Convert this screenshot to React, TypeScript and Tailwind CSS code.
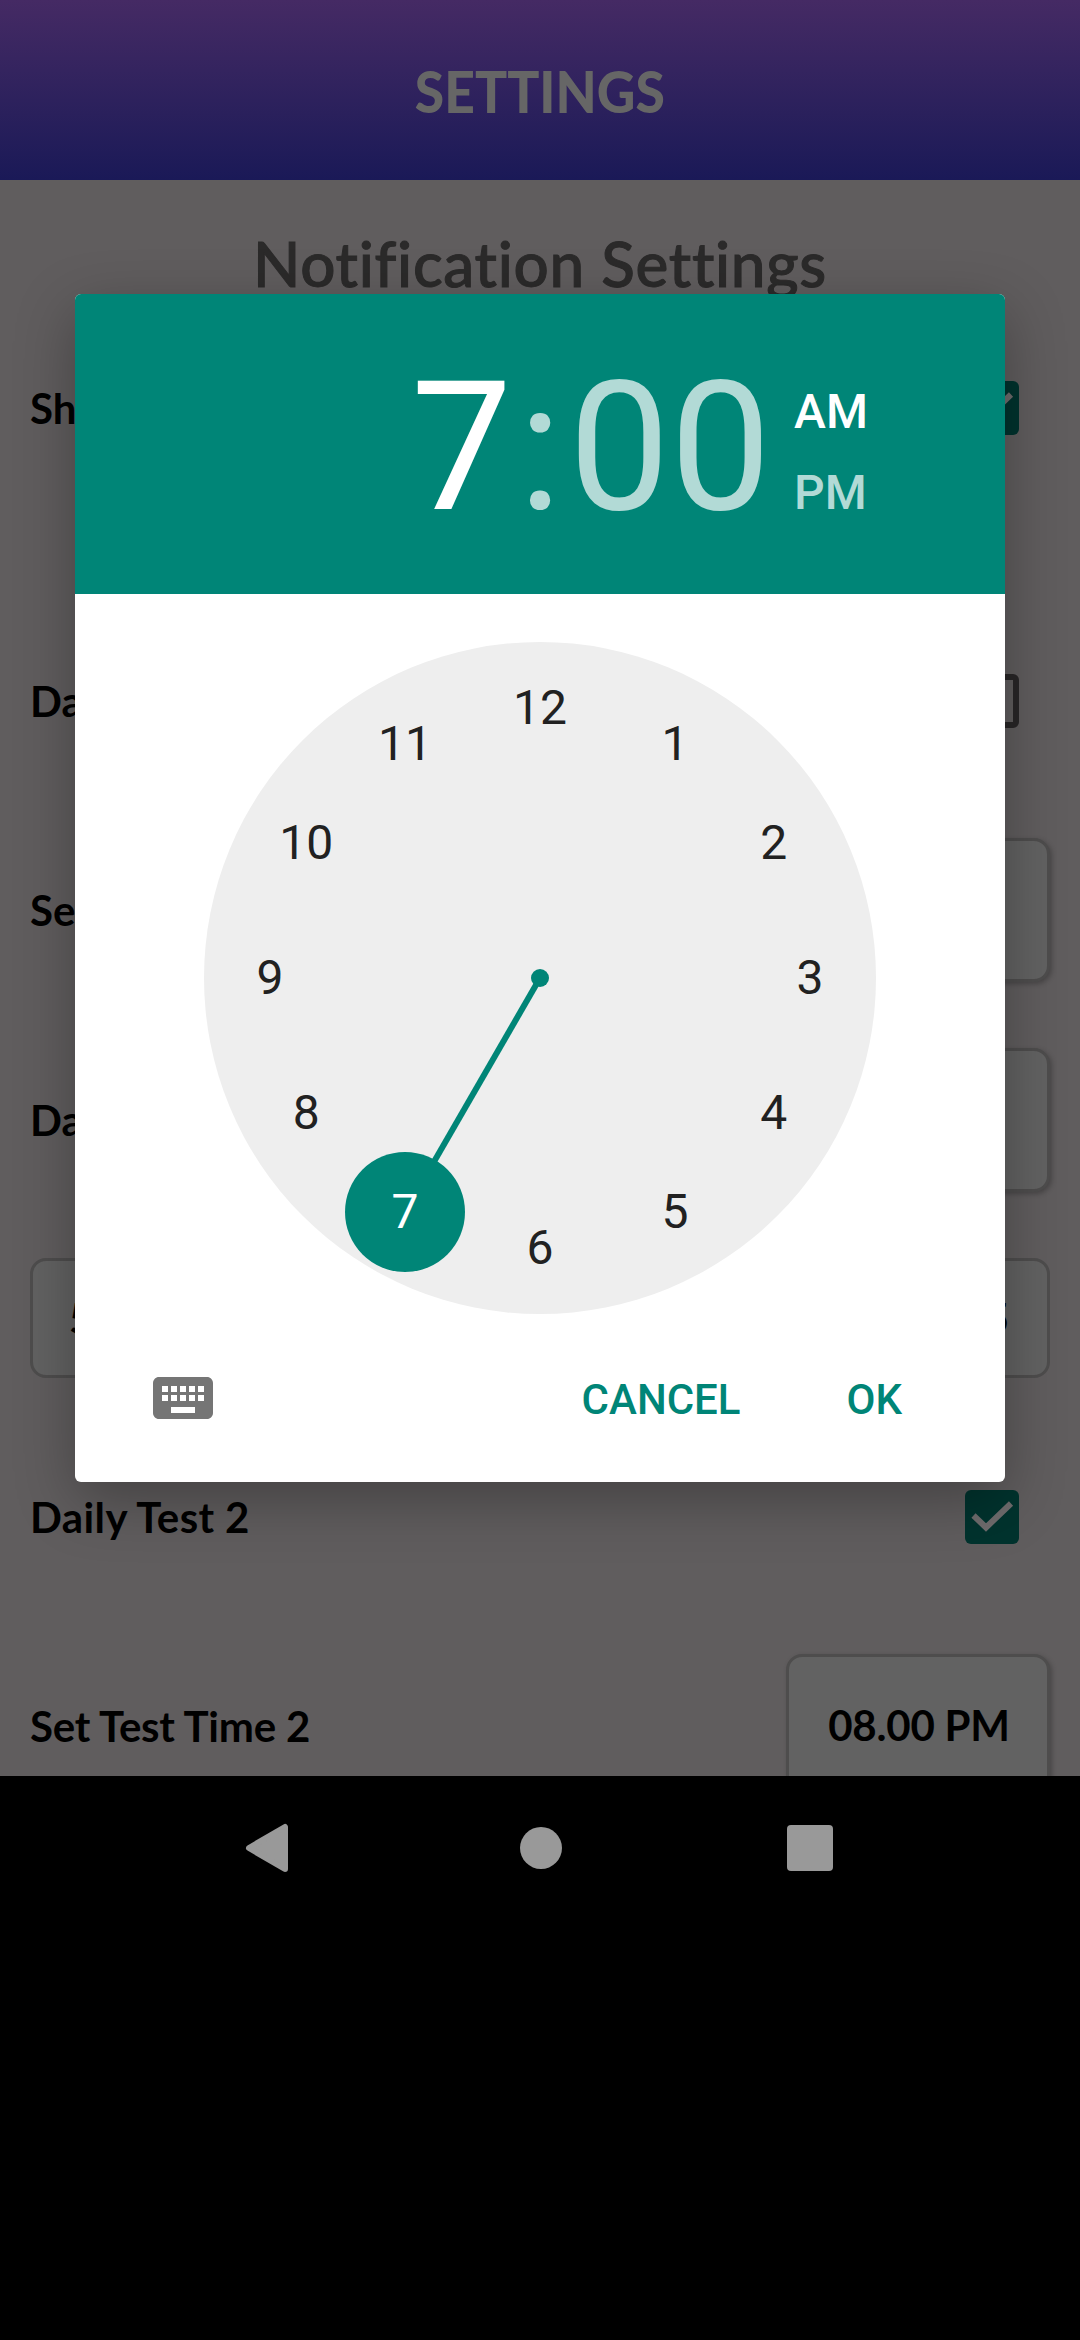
import type { ReactNode } from "react";

const label = "font-['Lato',sans-serif] font-bold text-[42px] leading-none text-black whitespace-nowrap";

function Check() {
  return (
    <div className="mr-[31px] size-[54px] shrink-0 rounded-[6px] bg-[#01332e]">
      <svg viewBox="0 0 54 54" className="size-full" fill="none">
        <path d="M8.5 25.5 21 37.5 46 13.5" stroke="#6f6c6d" strokeWidth="6" />
      </svg>
    </div>
  );
}

function TimeBox({ children }: { children?: ReactNode }) {
  return (
    <div className="flex h-[144px] w-[264px] shrink-0 items-center justify-center rounded-[16px] border-[3px] border-[#4e4d4d] bg-[#626262] shadow-[2px_2px_5px_rgba(0,0,0,0.25)]">
      {children}
    </div>
  );
}

function Row({ text, className, children }: { text: string; className: string; children: ReactNode }) {
  return (
    <div className={`flex h-[144px] shrink-0 items-center justify-between ${className}`}>
      <span className={`${label} pb-px`}>{text}</span>
      {children}
    </div>
  );
}

const hours = [1, 2, 3, 4, 5, 6, 7, 8, 9, 10, 11, 12];

function ClockFace() {
  return (
    <svg viewBox="0 0 672 672" className="mx-auto mt-12 size-[672px] shrink-0">
      <circle cx="336" cy="336" r="336" fill="#eeeeee" />
      <line x1="336" y1="336" x2="201" y2="570" stroke="#008577" strokeWidth="6" />
      <circle cx="336" cy="336" r="9" fill="#008577" />
      <circle cx="201" cy="570" r="60" fill="#008577" />
      {hours.map((h) => {
        const a = (h * Math.PI) / 6;
        return (
          <text
            key={h}
            x={336 + 270 * Math.sin(a)}
            y={336 - 270 * Math.cos(a) + 16}
            textAnchor="middle"
            className="font-['Roboto',sans-serif] text-[48px]"
            fill={h === 7 ? "#ffffff" : "#212121"}
          >
            {h}
          </text>
        );
      })}
    </svg>
  );
}

function TimePicker() {
  return (
    <div className="absolute top-[294px] left-[75px] flex h-[1188px] w-[930px] flex-col overflow-hidden rounded-[6px] bg-white font-['Roboto',sans-serif]">
      <div className="flex h-[300px] shrink-0 bg-[#008577] pl-[336px]">
        <div className="flex pt-[48px] text-[180px] leading-[211px] text-[#b2dad6]">
          <span className="text-white">7</span>
          <span className="mr-[7px] ml-[6px]">:</span>
          <span>00</span>
        </div>
        <div className="flex flex-col gap-[25px] pt-[90px] pl-[23px] text-5xl leading-[56px] font-medium text-[#b2dad6]">
          <span className="text-white">AM</span>
          <span>PM</span>
        </div>
      </div>
      <ClockFace />
      <div className="flex h-[168px] items-center pr-[103px] pl-[72px] text-[42px] leading-none font-medium text-[#008577]">
        <svg viewBox="0 0 24 24" className="mr-auto size-[72px]" fill="#757575">
          <path d="M20 5H4c-1.1 0-1.99.9-1.99 2L2 17c0 1.1.9 2 2 2h16c1.1 0 2-.9 2-2V7c0-1.1-.9-2-2-2zm-9 3h2v2h-2V8zm0 3h2v2h-2v-2zM8 8h2v2H8V8zm0 3h2v2H8v-2zm-1 2H5v-2h2v2zm0-3H5V8h2v2zm9 7H8v-2h8v2zm0-4h-2v-2h2v2zm0-3h-2V8h2v2zm3 3h-2v-2h2v2zm0-3h-2V8h2v2z" />
        </svg>
        <span className="mr-[106px] pt-[3px]">CANCEL</span>
        <span className="pt-[3px]">OK</span>
      </div>
    </div>
  );
}

export default function App() {
  return (
    <div className="relative flex h-[2340px] w-[1080px] flex-col overflow-hidden bg-black">
      <div className="flex h-[1776px] shrink-0 flex-col overflow-hidden bg-[#605d5e]">
        <header className="flex h-[180px] shrink-0 items-center justify-center bg-linear-to-b from-[#452a64] to-[#1a1957]">
          <h1 className="scale-x-[0.92] pt-[2px] font-['Lato',sans-serif] text-[58px] leading-none font-black text-[#666666]">
            SETTINGS
          </h1>
        </header>
        <main className="flex flex-col px-[30px]">
          <h2 className="h-[156px] pt-[51px] text-center font-['Lato',sans-serif] text-[62px] leading-[64px] font-medium tracking-[0.7px] text-[#2b2a2a] [-webkit-text-stroke:1px_#2b2a2a] [font-variant-ligatures:none]">
            Notification Settings
          </h2>
          <Row text="Show" className=""><Check /></Row>
          <Row text="Daily" className="mt-[149px]">
            <div className="mr-[31px] size-[54px] rounded-[6px] border-[6px] border-[#282627]" />
          </Row>
          <Row text="Set" className="mt-[65px]"><TimeBox /></Row>
          <Row text="Daily" className="mt-[66px]"><TimeBox /></Row>
          <div className="mt-[66px] flex h-[120px] shrink-0 items-center justify-between rounded-[16px] border-[3px] border-[#4e4d4d] bg-[#626262] pr-[38px] pl-[36px]">
            <span className={label}>5</span>
            <span className={label}>5</span>
          </div>
          <Row text="Daily Test 2" className="mt-[67px] tracking-[0.4px]"><Check /></Row>
          <Row text="Set Test Time 2" className="mt-[65px] tracking-[-0.2px]">
            <TimeBox><span className={`${label} pb-[2px] pl-[2px]`}>08.00 PM</span></TimeBox>
          </Row>
        </main>
      </div>
      <nav className="flex h-36 items-center justify-between px-[231px]">
        <svg viewBox="0 0 72 72" className="size-[72px]" fill="#999999" stroke="#999999" strokeWidth="6" strokeLinejoin="round">
          <path d="M18 36 54 15V57Z" />
        </svg>
        <div className="-ml-[9px] size-[42px] rounded-full bg-[#999999]" />
        <div className="mr-[16px] size-[46px] rounded-[4px] bg-[#999999]" />
      </nav>
      <div className="absolute top-[294px] left-[75px] h-[1188px] w-[930px] rounded-[6px] shadow-[0_18px_60px_rgba(0,0,0,0.3)]" />
      <TimePicker />
    </div>
  );
}
